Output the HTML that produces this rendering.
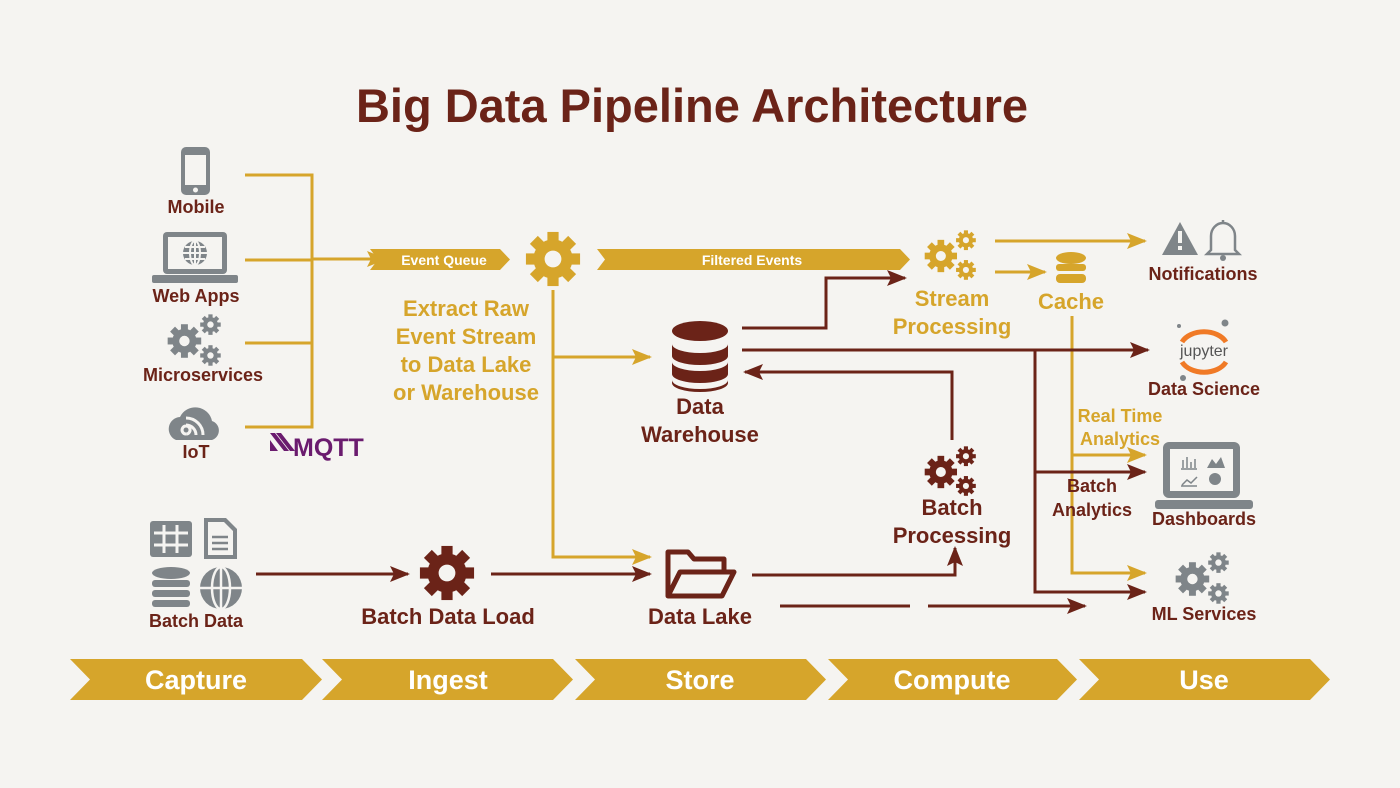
<!DOCTYPE html>
<html><head><meta charset="utf-8"><style>
html,body{margin:0;padding:0;background:#f5f4f1;}
svg{display:block;font-family:"Liberation Sans",Arial,sans-serif;font-weight:bold;}
</style></head><body>
<svg width="1400" height="788" viewBox="0 0 1400 788" xmlns="http://www.w3.org/2000/svg">
<defs>
<symbol id="gear" viewBox="-30 -30 60 60" overflow="visible">
<circle r="21"/>
<rect x="-6" y="-29" width="12" height="14"/>
<rect x="-6" y="-29" width="12" height="14" transform="rotate(45)"/>
<rect x="-6" y="-29" width="12" height="14" transform="rotate(90)"/>
<rect x="-6" y="-29" width="12" height="14" transform="rotate(135)"/>
<rect x="-6" y="-29" width="12" height="14" transform="rotate(180)"/>
<rect x="-6" y="-29" width="12" height="14" transform="rotate(225)"/>
<rect x="-6" y="-29" width="12" height="14" transform="rotate(270)"/>
<rect x="-6" y="-29" width="12" height="14" transform="rotate(315)"/>
<circle r="9" fill="#f5f4f1"/>
</symbol>
<symbol id="gears3" viewBox="0 0 60 56" overflow="visible">
<use href="#gear" x="0" y="10" width="36" height="36"/>
<use href="#gear" x="34" y="0" width="22" height="22"/>
<use href="#gear" x="34" y="32" width="22" height="22"/>
</symbol>
<marker id="AG" markerWidth="20" markerHeight="16" refX="18" refY="8" orient="auto" markerUnits="userSpaceOnUse"><path d="M0,0 L20,8 L0,16 L4,8 z" fill="#d6a52b"/></marker>
<marker id="AR" markerWidth="20" markerHeight="16" refX="18" refY="8" orient="auto" markerUnits="userSpaceOnUse"><path d="M0,0 L20,8 L0,16 L4,8 z" fill="#6b2318"/></marker>
</defs>

<text x="692" y="122" text-anchor="middle" font-size="47" fill="#6b2318">Big Data Pipeline Architecture</text>

<!-- left sources -->
<g fill="#7f8589">
<rect x="181" y="147" width="29" height="48" rx="5"/>
<rect x="185" y="155" width="21" height="30" fill="#f5f4f1"/>
<circle cx="195.5" cy="190" r="2.5" fill="#f5f4f1"/>
<rect x="163" y="232" width="64" height="42" rx="4"/>
<rect x="168" y="237" width="54" height="32" fill="#f5f4f1"/>
<rect x="152" y="275" width="86" height="8" rx="2"/>
<circle cx="195" cy="253" r="12"/>
<path d="M183,253 H207 M195,241 V265 M185,247 H205 M185,259 H205" stroke="#f5f4f1" stroke-width="2" fill="none"/>
<ellipse cx="195" cy="253" rx="5" ry="12" stroke="#f5f4f1" stroke-width="2" fill="none"/>
<use href="#gears3" x="167" y="314" width="58" height="54"/>
<path d="M176,440 a12,12 0 0 1 4,-23 a17,17 0 0 1 32,4 a10,10 0 0 1 0,19 z"/>
<path d="M186,434 a4,4 0 1 1 0.1,0 M186,425 a10,10 0 0 1 10,10 M186,418 a17,17 0 0 1 17,17" stroke="#f5f4f1" stroke-width="3" fill="none"/>
</g>
<g font-size="18" fill="#6b2318" text-anchor="middle">
<text x="196" y="213">Mobile</text>
<text x="196" y="302">Web Apps</text>
<text x="203" y="381">Microservices</text>
<text x="196" y="458">IoT</text>
</g>
<g fill="#6a1b6e">
<path d="M270,433 h5 l14,18 h-5 z M276,433 h5 l14,18 h-5 z M270,440 l8,11 h-8 z"/>
<text x="293" y="456" font-size="25" fill="#6a1b6e">MQTT</text>
</g>

<!-- gold bracket -->
<g stroke="#d6a52b" stroke-width="3" fill="none">
<path d="M245,175 H312 V427 H245 M245,260 H312 M245,343 H312"/>
<path d="M312,259 H385" marker-end="url(#AG)"/>
<path d="M553,290 V557 H650" marker-end="url(#AG)"/>
<path d="M553,357 H650" marker-end="url(#AG)"/>
<path d="M995,241 H1145" marker-end="url(#AG)"/>
<path d="M995,272 H1045" marker-end="url(#AG)"/>
<path d="M1072,316 V573 H1145" marker-end="url(#AG)"/>
<path d="M1072,455 H1145" marker-end="url(#AG)"/>
</g>
<path d="M370,249 H500 L510,259.5 L500,270 H370 L378,259.5 z" fill="#d6a52b"/>
<text x="444" y="265" font-size="14" fill="#fff" text-anchor="middle">Event Queue</text>
<use href="#gear" x="525" y="231" width="56" height="56" fill="#d6a52b"/>
<path d="M597,249 H900 L910,259.5 L900,270 H597 L605,259.5 z" fill="#d6a52b"/>
<text x="752" y="265" font-size="14" fill="#fff" text-anchor="middle">Filtered Events</text>
<g font-size="22" fill="#d6a52b" text-anchor="middle">
<text x="466" y="316">Extract Raw</text>
<text x="466" y="344">Event Stream</text>
<text x="466" y="372">to Data Lake</text>
<text x="466" y="400">or Warehouse</text>
<text x="952" y="306">Stream</text>
<text x="952" y="334">Processing</text>
<text x="1071" y="309">Cache</text>
</g>
<g font-size="18" fill="#d6a52b" text-anchor="middle">
<text x="1120" y="422">Real Time</text>
<text x="1120" y="445">Analytics</text>
</g>
<use href="#gears3" x="924" y="230" width="56" height="52" fill="#d6a52b"/>
<g fill="#d6a52b">
<ellipse cx="1071" cy="258" rx="15" ry="6"/>
<rect x="1056" y="264" width="30" height="7" rx="3"/>
<rect x="1056" y="274" width="30" height="9" rx="4"/>
</g>

<!-- red lines -->
<g stroke="#6b2318" stroke-width="3" fill="none">
<path d="M742,328 H826 V278 H905" marker-end="url(#AR)"/>
<path d="M742,350 H1148" marker-end="url(#AR)"/>
<path d="M952,440 V372 H745" marker-end="url(#AR)"/>
<path d="M1035,350 V592 H1145" marker-end="url(#AR)"/>
<path d="M1035,472 H1145" marker-end="url(#AR)"/>
<path d="M752,575 H955 V548" marker-end="url(#AR)"/>
<path d="M256,574 H408" marker-end="url(#AR)"/>
<path d="M491,574 H650" marker-end="url(#AR)"/>
<path d="M780,606 H910"/>
<path d="M928,606 H1085" marker-end="url(#AR)"/>
</g>
<g fill="#6b2318">
<ellipse cx="700" cy="331" rx="28" ry="10"/>
<path d="M672,344 a28,9 0 0 0 56,0 v12 a28,9 0 0 1 -56,0 z"/>
<path d="M672,362 a28,9 0 0 0 56,0 v12 a28,9 0 0 1 -56,0 z"/>
<path d="M672,380 a28,9 0 0 0 56,0 v3 a28,9 0 0 1 -56,0 z"/>
</g>
<g fill="none" stroke="#6b2318" stroke-width="5" stroke-linejoin="round">
<path d="M668,596 V552 H688 L694,559 H724 V570"/>
<path d="M668,596 L680,572 H734 L722,596 z"/>
</g>
<use href="#gear" x="419" y="545" width="56" height="56" fill="#6b2318"/>
<use href="#gears3" x="924" y="446" width="56" height="52" fill="#6b2318"/>
<g font-size="22" fill="#6b2318" text-anchor="middle">
<text x="700" y="414">Data</text>
<text x="700" y="442">Warehouse</text>
<text x="952" y="515">Batch</text>
<text x="952" y="543">Processing</text>
<text x="448" y="624">Batch Data Load</text>
<text x="700" y="624">Data Lake</text>
</g>
<g font-size="18" fill="#6b2318" text-anchor="middle">
<text x="1092" y="492">Batch</text>
<text x="1092" y="516">Analytics</text>
<text x="196" y="627">Batch Data</text>
<text x="1203" y="280">Notifications</text>
<text x="1204" y="395">Data Science</text>
<text x="1204" y="525">Dashboards</text>
<text x="1204" y="620">ML Services</text>
</g>

<!-- batch data icons -->
<g fill="#7f8589">
<rect x="150" y="521" width="42" height="36" rx="3"/>
<path d="M154,533 h34 M154,545 h34 M164,525 v28 M177,525 v28" stroke="#f5f4f1" stroke-width="3"/>
<path d="M204,518 h22 l11,11 v30 h-33 z"/>
<path d="M208,522 h16 l9,9 v24 h-25 z" fill="#f5f4f1"/>
<path d="M212,537 h16 M212,543 h16 M212,549 h16" stroke="#7f8589" stroke-width="2.5"/>
<ellipse cx="171" cy="573" rx="19" ry="6"/>
<rect x="152" y="580" width="38" height="7" rx="3"/>
<rect x="152" y="590" width="38" height="7" rx="3"/>
<rect x="152" y="600" width="38" height="7" rx="3"/>
<circle cx="221" cy="588" r="21"/>
<path d="M200,588 h42 M221,567 v42" stroke="#f5f4f1" stroke-width="2.5"/>
<ellipse cx="221" cy="588" rx="9" ry="21" fill="none" stroke="#f5f4f1" stroke-width="2.5"/>
</g>

<!-- right icons -->
<g fill="#7f8589">
<path d="M1180,222 L1198,255 H1162 z"/>
<rect x="1178" y="231" width="4" height="12" fill="#f5f4f1"/>
<rect x="1178" y="246" width="4" height="4" fill="#f5f4f1"/>
<path d="M1211,250 V236 a12,13 0 0 1 24,0 V250 l4,4 H1207 z M1223,222 v-2" fill="none" stroke="#7f8589" stroke-width="2.5"/>
<circle cx="1223" cy="258" r="3"/>
<rect x="1163" y="442" width="77" height="56" rx="6"/>
<rect x="1170" y="449" width="63" height="42" fill="#f5f4f1"/>
<rect x="1155" y="500" width="98" height="9" rx="3"/>
<path d="M1183,468 v-8 M1187,468 v-11 M1191,468 v-6 M1195,468 v-9 M1181,469 h16" stroke="#7f8589" stroke-width="1.5"/>
<path d="M1207,468 l5,-9 l4,5 l5,-7 l4,11 z"/>
<path d="M1182,485 l5,-5 l4,3 l6,-6 M1181,486 h16" stroke="#7f8589" stroke-width="1.5" fill="none"/>
<circle cx="1215" cy="479" r="6"/>
<use href="#gears3" x="1175" y="552" width="58" height="54"/>
</g>
<g>
<path d="M1182,342 A24,17 0 0 1 1226,342" fill="none" stroke="#f07a26" stroke-width="5"/>
<path d="M1182,362 A24,17 0 0 0 1226,362" fill="none" stroke="#f07a26" stroke-width="5"/>
<text x="1204" y="356" font-size="16" font-weight="normal" fill="#555" text-anchor="middle">jupyter</text>
<circle cx="1225" cy="323" r="3.5" fill="#7f8589"/>
<circle cx="1179" cy="326" r="2" fill="#7f8589"/>
<circle cx="1183" cy="378" r="3" fill="#7f8589"/>
</g>

<!-- bottom stages -->
<g fill="#d6a52b">
<path d="M70,659 H302 L322,679.5 L302,700 H70 L90,679.5 z"/>
<path d="M322,659 H553 L573,679.5 L553,700 H322 L342,679.5 z"/>
<path d="M575,659 H806 L826,679.5 L806,700 H575 L595,679.5 z"/>
<path d="M828,659 H1057 L1077,679.5 L1057,700 H828 L848,679.5 z"/>
<path d="M1079,659 H1310 L1330,679.5 L1310,700 H1079 L1099,679.5 z"/>
</g>
<g font-size="27" fill="#fff" text-anchor="middle">
<text x="196" y="689">Capture</text>
<text x="448" y="689">Ingest</text>
<text x="700" y="689">Store</text>
<text x="952" y="689">Compute</text>
<text x="1204" y="689">Use</text>
</g>
</svg>
</body></html>
